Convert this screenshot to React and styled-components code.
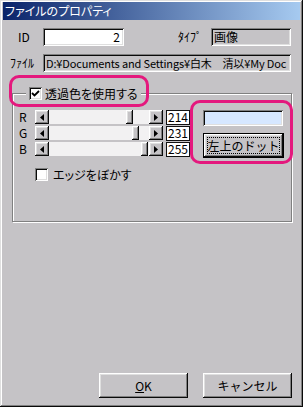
import React from 'react';
import styled, { createGlobalStyle } from 'styled-components';

const face = '#c5c3c6';
const pink = '#e4187d';
const font = `"Noto Sans CJK JP", "Liberation Sans", sans-serif`;

const raised = `box-shadow: inset -1px -1px #0a0a0a, inset 1px 1px #ffffff, inset -2px -2px #808080, inset 2px 2px #dfdfdf;`;
const sunken = `box-shadow: inset 1px 1px #808080, inset -1px -1px #ffffff, inset 2px 2px #0a0a0a, inset -2px -2px #dfdfdf;`;

const GlobalStyle = createGlobalStyle`
  html, body { margin: 0; padding: 0; background: ${face}; }
  body { font-family: ${font}; font-size: 12px; color: #000; }
  * { box-sizing: border-box; }
`;

const Window = styled.div`
  position: relative;
  width: 303px;
  height: 407px;
  padding: 2px 3px 3px 3px;
  display: flex;
  flex-direction: column;
  background: ${face};
  box-shadow: inset -1px -1px #0a0a0a, inset 1px 1px #dfdfdf, inset -2px -2px #808080, inset 2px 2px #ffffff;
`;

const TitleBar = styled.div`
  height: 18px;
  display: flex;
  align-items: center;
  padding-left: 2px;
  background: linear-gradient(to right, #0a246a, #a6caf0);
  color: #fff;
  font-size: 12px;
  line-height: 1;
  font-feature-settings: "palt";
`;

const Body = styled.div`
  flex: 1;
  display: flex;
  flex-direction: column;
`;

const Row = styled.div`
  display: flex;
  align-items: center;
  height: 18px;
  margin-top: ${p => p.$top}px;
  padding-left: 7px;
`;

const Label = styled.span`
  width: 33px;
  margin-left: ${p => p.$ml || 0}px;
  padding-left: ${p => p.$pl || 0}px;
  line-height: 1;
  white-space: nowrap;
`;

const Field = styled.div`
  width: ${p => p.$w}px;
  height: 18px;
  display: flex;
  align-items: center;
  justify-content: ${p => (p.$right ? 'flex-end' : 'flex-start')};
  padding: 0 4px 0 3px;
  background: ${p => (p.$white ? '#fff' : face)};
  overflow: hidden;
  white-space: nowrap;
  line-height: 1;
  font-size: ${p => (p.$tight ? '11px' : '12px')};
  letter-spacing: ${p => (p.$tight ? '-0.15px' : 'normal')};
  ${sunken}
`;

const Group = styled.div`
  width: 280px;
  height: 129px;
  margin: 21px 0 0 9px;
  display: flex;
  flex-direction: column;
  border: 1px solid #808080;
  box-shadow: inset 1px 1px #fff, 1px 1px #fff;
`;

const Legend = styled.div`
  align-self: flex-start;
  display: flex;
  align-items: center;
  gap: 3px;
  height: 13px;
  margin: -7px 0 0 13px;
  padding: 0 3px;
  background: ${face};
  line-height: 1;
  font-feature-settings: "palt";
`;

const Box = styled.span`
  width: 13px;
  height: 13px;
  display: flex;
  align-items: center;
  justify-content: center;
  background: #fff;
  ${sunken}
`;

const Content = styled.div`
  display: flex;
  padding: 10px 0 0 6px;
`;

const LeftCol = styled.div`
  display: flex;
  flex-direction: column;
  gap: 2px;
`;

const ChanRow = styled.div`
  display: flex;
  align-items: center;
  height: 14px;
`;

const ChanLabel = styled.span`
  width: 16px;
  line-height: 1;
`;

const Scroll = styled.div`
  width: 128px;
  height: 14px;
  display: flex;
`;

const Arrow = styled.span`
  width: 14px;
  height: 14px;
  display: flex;
  align-items: center;
  justify-content: center;
  background: ${face};
  ${raised}
`;

const Track = styled.div`
  flex: 1;
  display: flex;
  background: #f2f1f2;
`;

const Thumb = styled.span`
  width: 7px;
  height: 14px;
  background: ${face};
  ${raised}
`;

const Value = styled.span`
  width: 24px;
  height: 15px;
  margin-left: 3px;
  display: flex;
  align-items: center;
  justify-content: flex-end;
  padding-right: 1px;
  border: 1px solid #111;
  background: #fff;
  line-height: 1;
`;

const EdgeRow = styled.label`
  display: flex;
  align-items: center;
  gap: 5px;
  margin-top: 10px;
  padding-left: 16px;
  line-height: 1;
  font-feature-settings: "palt";
`;

const RightCol = styled.div`
  display: flex;
  flex-direction: column;
  margin-left: 13px;
`;

const Swatch = styled.div`
  width: 80px;
  height: 16px;
  ${sunken}
`;

const DefaultButton = styled.button`
  width: 81px;
  height: 25px;
  margin-top: 7px;
  padding: 0;
  border: 1px solid #000;
  background: ${face};
  font: 12px ${font};
  color: #000;
  outline: 1px dotted #000;
  outline-offset: -5px;
  ${raised}
`;

const Footer = styled.div`
  margin-top: auto;
  display: flex;
  justify-content: flex-end;
  gap: 15px;
  padding: 0 8px 6px 0;
`;

const Button = styled.button`
  width: 89px;
  height: 25px;
  padding: 0;
  border: none;
  background: ${face};
  font: 12px ${font};
  color: #000;
  ${raised}
`;

const Mark = styled.div`
  position: absolute;
  left: ${p => p.$x}px;
  top: ${p => p.$y}px;
  width: ${p => p.$w}px;
  height: ${p => p.$h}px;
  border: 3px solid ${pink};
  border-radius: 10px;
  pointer-events: none;
`;

const Check = () => (
  <svg width="9" height="9" viewBox="0 0 9 9">
    <polyline points="1,4 3.5,6.5 8,2" fill="none" stroke="#000" strokeWidth="1.8" />
  </svg>
);

const Tri = ({ dir }) => (
  <svg width="4" height="7" viewBox="0 0 4 7">
    <polygon points={dir === 'left' ? '4,0 4,7 0,3.5' : '0,0 0,7 4,3.5'} fill="#000" />
  </svg>
);

const channels = [
  { name: 'R', value: 214 },
  { name: 'G', value: 231 },
  { name: 'B', value: 255 },
];

export default function App() {
  return (
    <>
      <GlobalStyle />
      <Window>
        <TitleBar>ファイルのプロパティ</TitleBar>
        <Body>
          <Row $top={8}>
            <Label $pl={8}>ID</Label>
            <Field $w={81} $white $right>2</Field>
            <Label $ml={54}>ﾀｲﾌﾟ</Label>
            <Field $w={80}>画像</Field>
          </Row>
          <Row $top={8}>
            <Label>ﾌｧｲﾙ</Label>
            <Field $w={248} $tight>D:¥Documents and Settings¥白木　清以¥My Doc</Field>
          </Row>
          <Group>
            <Legend>
              <Box><Check /></Box>
              透過色を使用する
            </Legend>
            <Content>
              <LeftCol>
                {channels.map(c => (
                  <ChanRow key={c.name}>
                    <ChanLabel>{c.name}</ChanLabel>
                    <Scroll>
                      <Arrow><Tri dir="left" /></Arrow>
                      <Track>
                        <span style={{ width: Math.round((c.value / 255) * 92) }} />
                        <Thumb />
                      </Track>
                      <Arrow><Tri dir="right" /></Arrow>
                    </Scroll>
                    <Value>{c.value}</Value>
                  </ChanRow>
                ))}
                <EdgeRow>
                  <Box />
                  エッジをぼかす
                </EdgeRow>
              </LeftCol>
              <RightCol>
                <Swatch style={{ background: 'rgb(214, 231, 255)' }} />
                <DefaultButton>左上のドット</DefaultButton>
              </RightCol>
            </Content>
          </Group>
          <Footer>
            <Button><u>O</u>K</Button>
            <Button>キャンセル</Button>
          </Footer>
        </Body>
        <Mark $x={9} $y={75} $w={140} $h={32} />
        <Mark $x={190} $y={100} $w={103} $h={64} />
      </Window>
    </>
  );
}
